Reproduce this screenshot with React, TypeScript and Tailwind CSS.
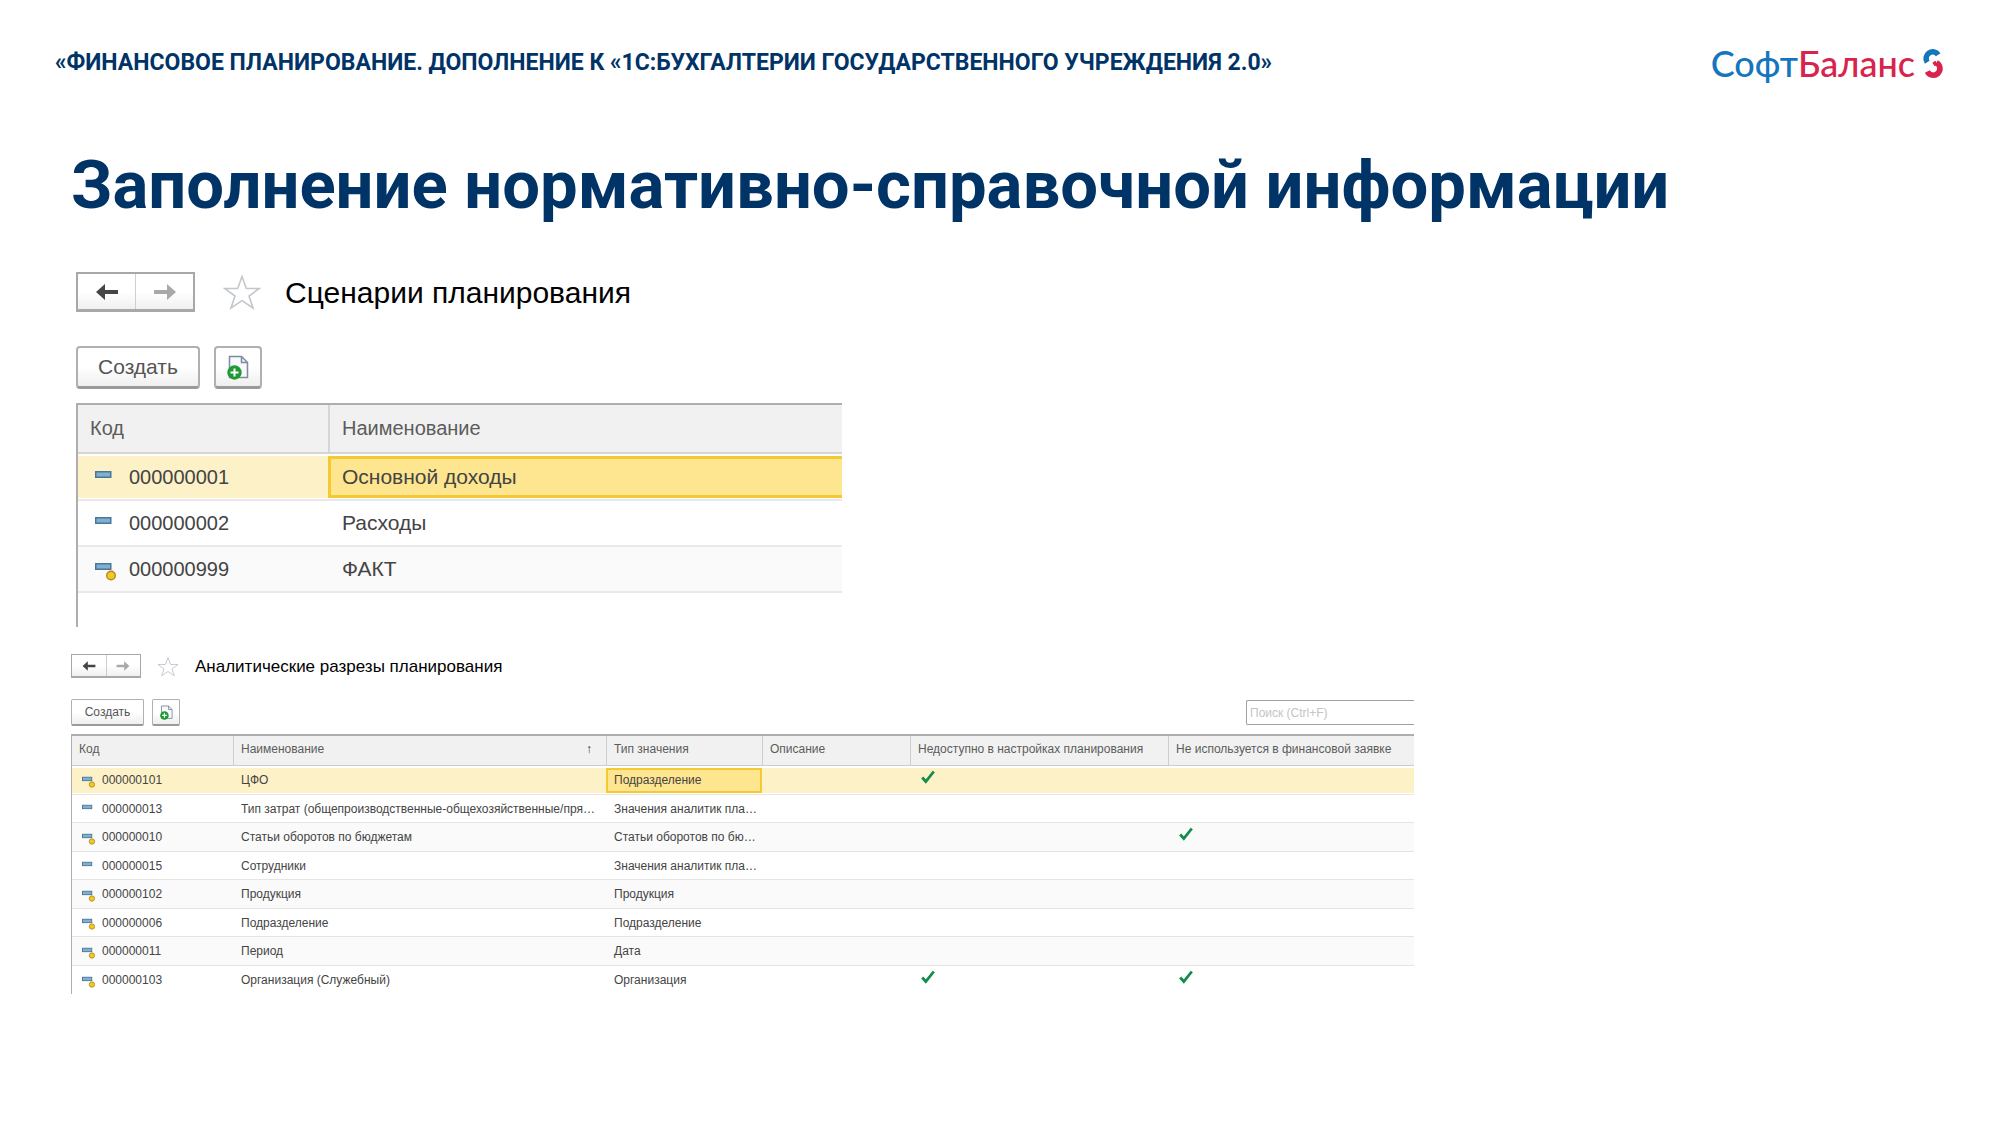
import clsx from 'clsx';

interface Scenario {
  code: string;
  name: string;
  predefined: boolean;
}

interface Dimension {
  code: string;
  name: string;
  type: string;
  predefined: boolean;
  hiddenInSettings?: boolean;
  unusedInRequest?: boolean;
}

const scenarios: Scenario[] = [
  { code: '000000001', name: 'Основной доходы', predefined: false },
  { code: '000000002', name: 'Расходы', predefined: false },
  { code: '000000999', name: 'ФАКТ', predefined: true },
];

const dimensions: Dimension[] = [
  { code: '000000101', name: 'ЦФО', type: 'Подразделение', predefined: true, hiddenInSettings: true },
  { code: '000000013', name: 'Тип затрат (общепроизводственные-общехозяйственные/пря…', type: 'Значения аналитик пла…', predefined: false },
  { code: '000000010', name: 'Статьи оборотов по бюджетам', type: 'Статьи оборотов по бю…', predefined: true, unusedInRequest: true },
  { code: '000000015', name: 'Сотрудники', type: 'Значения аналитик пла…', predefined: false },
  { code: '000000102', name: 'Продукция', type: 'Продукция', predefined: true },
  { code: '000000006', name: 'Подразделение', type: 'Подразделение', predefined: true },
  { code: '000000011', name: 'Период', type: 'Дата', predefined: true },
  { code: '000000103', name: 'Организация (Служебный)', type: 'Организация', predefined: true, hiddenInSettings: true, unusedInRequest: true },
];

function Logo() {
  return (
    <div className="flex items-center gap-[7px]">
      <span className="font-['Lato','Open_Sans',sans-serif] text-[36px] leading-8 font-medium text-[#1576bd]">
        Софт<span className="text-[#d8234c]">Баланс</span>
      </span>
      <svg viewBox="0 0 22 31" className="h-[31px] w-[22px]" fill="none" strokeWidth="5.600" aria-hidden="true">
        <path d="M16.200 6.800A6.600 6.600 0 1 0 5.200 14.200" stroke="#1576bd" />
        <path d="M14.500 14.800A6.600 6.600 0 1 1 5.400 23.500" stroke="#d8234c" />
        <path d="M11.500 16.500L14.500 14.500" stroke="#d8234c" strokeWidth="4" />
      </svg>
    </div>
  );
}

function Arrow({ flip, className }: { flip?: boolean; className: string }) {
  return (
    <svg viewBox="0 0 24 18" className={clsx(className, flip && '-scale-x-100')} fill="currentColor" aria-hidden="true">
      <path d="M1 9l9-8v6h13v4H10v6z" />
    </svg>
  );
}

function Star({ className }: { className: string }) {
  return (
    <svg viewBox="0 0 38 36" className={className} fill="none" stroke="#c3c7cc" strokeWidth="1.600" aria-hidden="true">
      <path d="M19 2.500l4.300 12h13L26 22l4 12-11-7.400L8 34l4-12L1.700 14.500h13z" />
    </svg>
  );
}

function CopyIcon({ className }: { className: string }) {
  return (
    <svg viewBox="0 0 22 25" className={className} aria-hidden="true">
      <path d="M2.500 1.500h12l6 6v15h-18z" fill="#f7f9fc" stroke="#7d8ba0" strokeWidth="1.500" />
      <path d="M14.500 1.500v6h6" fill="none" stroke="#7d8ba0" strokeWidth="1.500" />
      <circle cx="7.500" cy="17.500" r="7.200" fill="#1f9a32" />
      <path d="M7.500 13.500v8M3.500 17.500h8" stroke="#fff" strokeWidth="2" />
    </svg>
  );
}

function ItemIcon({ predefined, className }: { predefined: boolean; className: string }) {
  return (
    <svg viewBox="0 -5 21 24" className={className} aria-hidden="true">
      <rect x="0.750" y="1.750" width="15" height="5.500" fill="#7fb0d3" stroke="#4a7796" strokeWidth="1.500" />
      {predefined && <circle cx="16" cy="13.500" r="4.300" fill="#f3c822" stroke="#b48a1c" strokeWidth="1.400" />}
    </svg>
  );
}

function Check() {
  return (
    <svg viewBox="0 0 14 14" className="mb-[6px] ml-[3px] h-[14px] w-[14px]" fill="none" stroke="#128c4c" strokeWidth="2.800" role="img" aria-label="Да">
      <path d="M1.200 7.500l3.600 4L12.800 1.500" />
    </svg>
  );
}

function TitleBar({ title, small }: { title: string; small?: boolean }) {
  const half = 'flex flex-1 items-center justify-center';
  return (
    <div className={clsx('flex items-center', small ? 'h-6' : 'h-10')}>
      <div
        className={clsx(
          'flex h-full border-[#a8a8a8] bg-linear-to-b from-white from-50% to-[#f0f0f0]',
          small ? 'w-[70px] border border-b-2' : 'w-[119px] border-2 border-b-3'
        )}
      >
        <button type="button" aria-label="Назад" className={clsx(half, 'border-r border-[#cfcfcf] text-[#454545]')}>
          <Arrow className={small ? 'h-3 w-[14px]' : 'h-[18px] w-6'} />
        </button>
        <button type="button" aria-label="Вперед" className={clsx(half, 'text-[#a9a9a9]')}>
          <Arrow flip className={small ? 'h-3 w-[14px]' : 'h-[18px] w-6'} />
        </button>
      </div>
      <button type="button" aria-label="В избранное" className={small ? 'ml-4' : 'ml-7'}>
        <Star className={small ? 'h-[21px] w-[22px]' : 'h-9 w-[38px]'} />
      </button>
      <h2 className={clsx('text-black', small ? 'ml-4 pt-[2px] text-[17px] leading-6' : 'ml-6 pt-[2px] text-[30px] leading-10')}>
        {title}
      </h2>
    </div>
  );
}

function CreateButtons({ small }: { small?: boolean }) {
  const base = 'flex h-full items-center justify-center border-[#b0b0b0] border-b-[#9a9a9a] bg-linear-to-b from-white from-50% to-[#efefef] text-[#555]';
  return (
    <div className={clsx('flex', small ? 'h-[27px] gap-2' : 'h-[43px] gap-[14px]')}>
      <button
        type="button"
        className={clsx(base, small ? 'w-[73px] rounded-xs border border-b-2 text-[12px]' : 'w-[124px] rounded-sm border-2 border-b-3 text-[21px]')}
      >
        Создать
      </button>
      <button
        type="button"
        aria-label="Создать копированием"
        className={clsx(base, small ? 'w-7 rounded-xs border border-b-2' : 'w-12 rounded-sm border-2 border-b-3')}
      >
        <CopyIcon className={small ? 'h-[15px] w-[13px]' : 'h-[25px] w-[22px]'} />
      </button>
    </div>
  );
}

function ScenarioTable() {
  return (
    <div className="mt-[14px] h-[224px] w-full border-t-2 border-l-2 border-[#aeaeae]">
      <table className="w-full table-fixed border-separate border-spacing-0 text-left text-[20px] leading-6">
        <colgroup>
          <col className="w-[250px]" />
          <col />
        </colgroup>
        <thead>
          <tr className="h-[49px] text-[#5c5c5c]">
            <th className="border-b-2 border-[#d5d5d5] bg-[#f1f1f1] pb-[2px] pl-3 font-normal">Код</th>
            <th className="border-b-2 border-l-2 border-[#d5d5d5] bg-[#f1f1f1] pb-[2px] pl-3 font-normal">Наименование</th>
          </tr>
        </thead>
        <tbody className="text-[#444]">
          {scenarios.map((item, idx) => (
            <tr key={item.code} className="h-[46px] first:h-[47px] last:bg-[#fafafa]">
              <td
                className={clsx(
                  'border-b-2 border-[#e9e9e9] pl-[17px]',
                  idx === 0 && 'bg-[#fdf1c7] shadow-[inset_0_2px_0_#fff,inset_0_-1px_0_#fff]'
                )}
              >
                <span className="flex items-center gap-[13px]">
                  <ItemIcon predefined={item.predefined} className="h-6 w-[21px]" />
                  {item.code}
                </span>
              </td>
              <td
                className={clsx(
                  'border-b-2 border-[#e9e9e9] pl-[14px] text-[21px]',
                  idx === 0 &&
                    'bg-[#fee58f] shadow-[inset_0_2px_0_#fff,inset_0_-1px_0_#fff,inset_3px_0_0_#f4c931,inset_0_5px_0_#f4c931,inset_0_-4px_0_#f4c931]'
                )}
              >
                {item.name}
              </td>
            </tr>
          ))}
        </tbody>
      </table>
    </div>
  );
}

function DimensionTable() {
  const th = 'border-b border-[#cdcdcd] bg-[#f1f1f1] pb-[3px] pl-[7px] font-normal';
  const td = 'border-b border-[#e4e4e4] pl-2 whitespace-nowrap group-last:border-b-0';
  const active = 'bg-[#fdf1c7] shadow-[inset_0_2px_0_#fff,inset_0_-1px_0_#fff]';
  const selected =
    'bg-[#fee58f] shadow-[inset_0_2px_0_#fff,inset_0_-1px_0_#fff,inset_2px_0_0_#f4c931,inset_-2px_0_0_#f4c931,inset_0_4px_0_#f4c931,inset_0_-3px_0_#f4c931]';

  return (
    <div className="mt-2 w-full border-t-2 border-l border-[#aeaeae]">
      <table className="w-full table-fixed border-separate border-spacing-0 text-left text-[12px] leading-4">
        <colgroup>
          <col className="w-[161px]" />
          <col className="w-[373px]" />
          <col className="w-[156px]" />
          <col className="w-[148px]" />
          <col className="w-[258px]" />
          <col />
        </colgroup>
        <thead>
          <tr className="h-[30px] text-[#5c5c5c]">
            <th className={th}>Код</th>
            <th className={clsx(th, 'border-l')}>
              <span className="flex justify-between pr-[14px]">
                Наименование <span className="font-bold text-[#333]">↑</span>
              </span>
            </th>
            <th className={clsx(th, 'border-l')}>Тип значения</th>
            <th className={clsx(th, 'border-l')}>Описание</th>
            <th className={clsx(th, 'border-l')}>Недоступно в настройках планирования</th>
            <th className={clsx(th, 'border-l')}>Не используется в финансовой заявке</th>
          </tr>
        </thead>
        <tbody className="text-[#444]">
          {dimensions.map((item, idx) => (
            <tr key={item.code} className="group h-[29px] odd:bg-[#fafafa] even:h-7">
              <td className={clsx(td, idx === 0 && active)}>
                <span className="flex items-center gap-[7px] pl-[2px]">
                  <ItemIcon predefined={item.predefined} className="h-[15px] w-[13px]" />
                  {item.code}
                </span>
              </td>
              <td className={clsx(td, idx === 0 && active)}>{item.name}</td>
              <td className={clsx(td, idx === 0 && selected)}>{item.type}</td>
              <td className={clsx(td, idx === 0 && active)}></td>
              <td className={clsx(td, idx === 0 && active)}>{item.hiddenInSettings && <Check />}</td>
              <td className={clsx(td, idx === 0 && active)}>{item.unusedInRequest && <Check />}</td>
            </tr>
          ))}
        </tbody>
      </table>
    </div>
  );
}

export default function App() {
  return (
    <div className="min-h-screen bg-white font-['Liberation_Sans',Arial,sans-serif]">
      <header className="flex items-center justify-between pt-[47px] pr-14 pl-[55px]">
        <p className="font-['Roboto',sans-serif] text-[23px] leading-8 font-bold text-[#003366]">
          «ФИНАНСОВОЕ ПЛАНИРОВАНИЕ. ДОПОЛНЕНИЕ К «1С:БУХГАЛТЕРИИ ГОСУДАРСТВЕННОГО УЧРЕЖДЕНИЯ 2.0»
        </p>
        <Logo />
      </header>

      <main className="px-[71px]">
        <h1 className="mt-[66px] font-['Roboto',sans-serif] text-[67px] leading-[80px] font-bold text-[#003366]">
          Заполнение нормативно-справочной информации
        </h1>

        <section className="mt-[47px] ml-[5px] max-w-[766px]">
          <TitleBar title="Сценарии планирования" />
          <div className="mt-[34px]">
            <CreateButtons />
          </div>
          <ScenarioTable />
        </section>

        <section className="mt-[27px] max-w-[1343px]">
          <TitleBar title="Аналитические разрезы планирования" small />
          <div className="mt-[21px] flex items-center justify-between">
            <CreateButtons small />
            <input
              type="text"
              aria-label="Поиск"
              placeholder="Поиск (Ctrl+F)"
              className="h-[25px] w-[168px] rounded-l-xs border border-r-0 border-[#a0a0a0] pl-[3px] text-[12px] placeholder:text-[#c4c4c4]"
            />
          </div>
          <DimensionTable />
        </section>
      </main>
    </div>
  );
}
